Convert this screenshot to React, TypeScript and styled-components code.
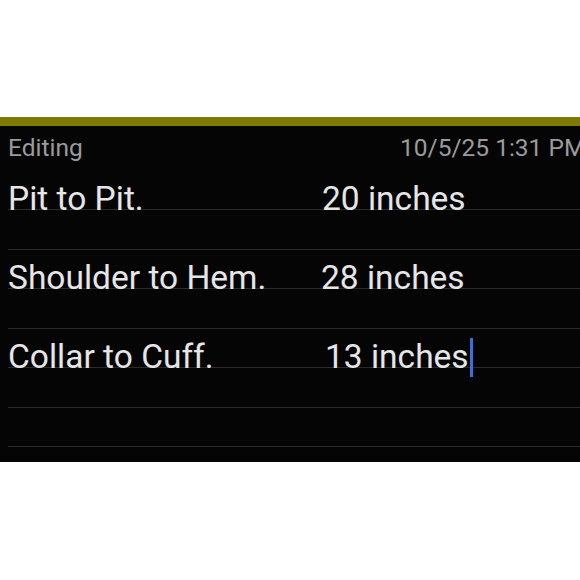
import React from "react";
import styled, { createGlobalStyle } from "styled-components";

const Global = createGlobalStyle`
  html, body { margin: 0; padding: 0; background: #ffffff; }
  body { font-family: Roboto, "Noto Sans", sans-serif; }
`;

const Page = styled.div`
  width: 580px;
  height: 580px;
  overflow: hidden;
  display: flex;
  flex-direction: column;
  background: #ffffff;
`;

const TopSpace = styled.div`
  height: 117px;
  flex-shrink: 0;
`;

const AccentBar = styled.div`
  height: 9px;
  background: #7e7a02;
  flex-shrink: 0;
`;

const Panel = styled.div`
  background: #050505;
  height: 336px;
  display: flex;
  flex-direction: column;
  overflow: hidden;
`;

const Header = styled.div`
  height: 45px;
  display: grid;
  grid-template-columns: 392px 1fr;
  align-items: end;
  padding-left: 8px;
  color: #9b9b9b;
  font-size: 24.5px;
  white-space: nowrap;
  line-height: 1;
  padding-bottom: 11px;
  box-sizing: border-box;
`;

const Lines = styled.div`
  display: flex;
  flex-direction: column;
  margin-left: 8px;
`;

const Line = styled.div<{ $h: number }>`
  height: ${(p) => p.$h}px;
  border-bottom: 1px solid #2b2b2b;
  box-sizing: border-box;
  display: grid;
  grid-template-columns: 313px 1fr;
  align-items: end;
  color: #e6e6e6;
  font-size: 33.5px;
  line-height: 1;
  white-space: nowrap;
`;

const Label = styled.span`
  transform: translateY(6px);
`;

const Value = styled.span<{ $shift: number }>`
  padding-left: ${(p) => p.$shift}px;
  transform: translateY(6px);
  justify-self: start;
  position: relative;
`;

const Caret = styled.span`
  position: absolute;
  right: -4px;
  top: -2px;
  width: 3px;
  height: 39px;
  background: #3b6ee2;
`;

const rows: { label?: string; value?: string; shift?: number; caret?: boolean; h: number }[] = [
  { label: "Pit to Pit.", value: "20 inches", shift: 1, h: 39 },
  { h: 40 },
  { label: "Shoulder to Hem.", value: "28 inches", shift: 0, h: 39 },
  { h: 40 },
  { label: "Collar to Cuff.", value: "13 inches", shift: 4, caret: true, h: 39 },
  { h: 40 },
  { h: 39 },
];

export default function App() {
  return (
    <>
      <Global />
      <Page>
        <TopSpace />
        <AccentBar />
        <Panel>
          <Header>
            <span>Editing</span>
            <span>10/5/25 1:31 PM</span>
          </Header>
          <Lines>
            {rows.map((r, i) => (
              <Line key={i} $h={r.h}>
                {r.label ? <Label>{r.label}</Label> : <span />}
                {r.value ? (
                  <Value $shift={r.shift ?? 0}>
                    {r.value}
                    {r.caret && <Caret />}
                  </Value>
                ) : (
                  <span />
                )}
              </Line>
            ))}
          </Lines>
        </Panel>
      </Page>
    </>
  );
}
